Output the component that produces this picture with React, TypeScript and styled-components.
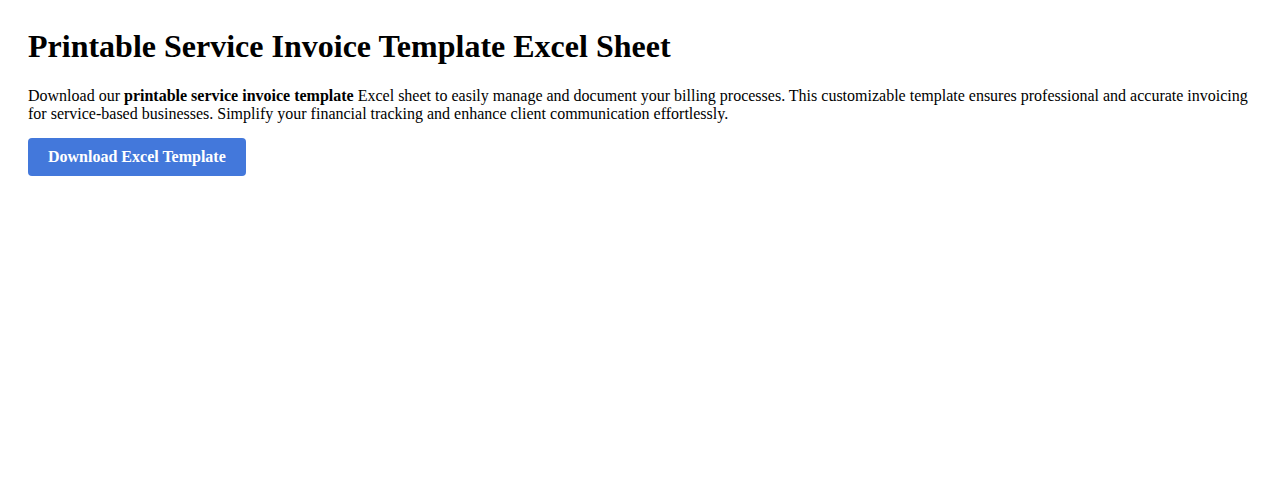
import React from "react";
import styled, { createGlobalStyle } from "styled-components";

const GlobalStyle = createGlobalStyle`
  html, body {
    margin: 0;
    padding: 0;
    background: #ffffff;
  }
  body {
    margin: 8px;
    font-family: "Liberation Serif", "Times New Roman", serif;
    color: #000000;
  }
`;

const Page = styled.main`
  padding: 20px;
`;

const Title = styled.h1`
  margin: 0 0 22px;
  font-size: 32px;
  font-weight: bold;
  line-height: normal;
`;

const Intro = styled.p`
  margin: 0 0 15px;
  font-size: 16px;
  line-height: normal;
`;

const DownloadButton = styled.button`
  display: inline-block;
  padding: 10px 20px;
  border: none;
  border-radius: 4px;
  background: #4378db;
  color: #ffffff;
  font-family: "Liberation Serif", "Times New Roman", serif;
  font-size: 16px;
  font-weight: bold;
  line-height: 18px;
  cursor: pointer;
`;

export default function App() {
  return (
    <>
      <GlobalStyle />
      <Page>
        <Title>Printable Service Invoice Template Excel Sheet</Title>
        <Intro>
          Download our <strong>printable service invoice template</strong> Excel sheet to easily manage and
          document your billing processes. This customizable template ensures professional and accurate
          invoicing for service-based businesses. Simplify your financial tracking and enhance client
          communication effortlessly.
        </Intro>
        <DownloadButton>Download Excel Template</DownloadButton>
      </Page>
    </>
  );
}
